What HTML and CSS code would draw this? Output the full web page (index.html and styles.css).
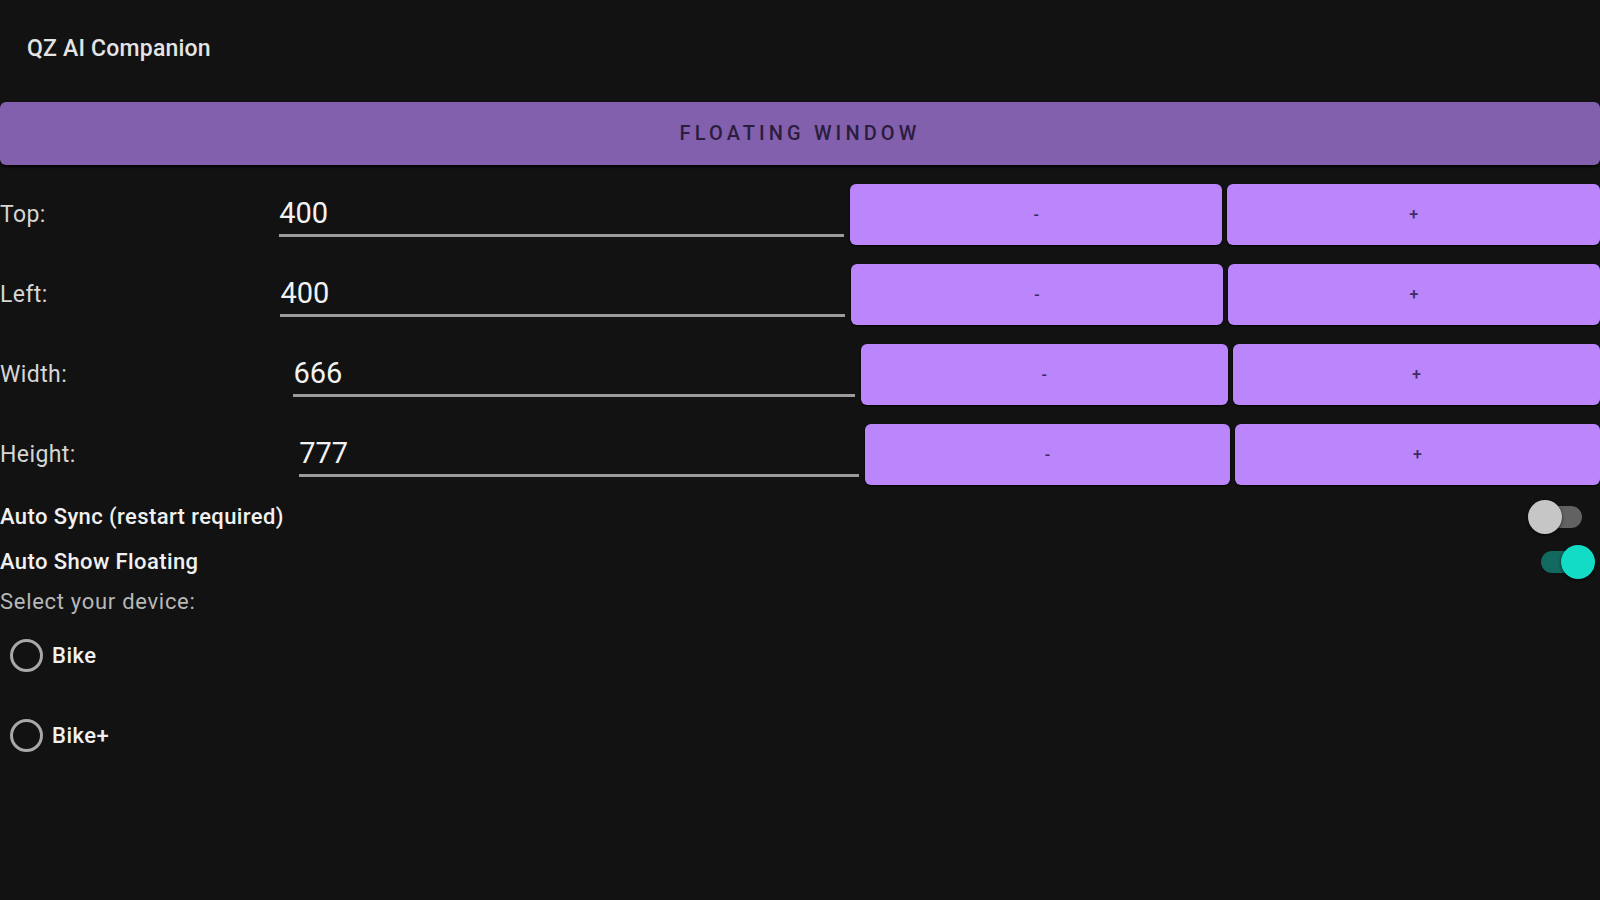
FILE: index.html
```html
<!DOCTYPE html>
<html lang="en">
<head>
<meta charset="utf-8">
<title>QZ AI Companion</title>
<link rel="stylesheet" href="styles.css">
</head>
<body>
<div class="app">
  <header class="topbar">
    <div class="title">QZ AI Companion</div>
  </header>

  <div class="section-bar">FLOATING WINDOW</div>

  <div class="fields">
    <div class="row">
      <div class="label">Top:</div>
      <div class="field"><span class="value">400</span></div>
      <div class="steppers">
        <button class="step">-</button>
        <button class="step">+</button>
      </div>
    </div>
    <div class="row">
      <div class="label">Left:</div>
      <div class="field"><span class="value">400</span></div>
      <div class="steppers">
        <button class="step">-</button>
        <button class="step">+</button>
      </div>
    </div>
    <div class="row">
      <div class="label">Width:</div>
      <div class="field"><span class="value">666</span></div>
      <div class="steppers">
        <button class="step">-</button>
        <button class="step">+</button>
      </div>
    </div>
    <div class="row">
      <div class="label">Height:</div>
      <div class="field"><span class="value">777</span></div>
      <div class="steppers">
        <button class="step">-</button>
        <button class="step">+</button>
      </div>
    </div>
  </div>

  <div class="switch-row">
    <div class="switch-label">Auto Sync (restart required)</div>
    <div class="switch switch-off switch-a"><span class="track"></span><span class="thumb"></span></div>
  </div>
  <div class="switch-row">
    <div class="switch-label">Auto Show Floating</div>
    <div class="switch switch-on switch-b"><span class="track"></span><span class="thumb"></span></div>
  </div>

  <div class="select-label">Select your device:</div>

  <div class="radio-row">
    <span class="radio"></span>
    <span class="radio-label">Bike</span>
  </div>
  <div class="radio-row">
    <span class="radio"></span>
    <span class="radio-label">Bike+</span>
  </div>
</div>
</body>
</html>
```

FILE: styles.css
```css
* {
  box-sizing: border-box;
}

html, body {
  margin: 0;
  padding: 0;
  background: #121212;
}

body {
  width: 1600px;
  height: 900px;
  overflow: hidden;
  font-family: Roboto, "Noto Sans", "Liberation Sans", sans-serif;
  color: #e6e6e6;
}

.topbar {
  height: 102px;
  padding: 36px 0 0 27px;
}

.title {
  font-size: 23px;
  line-height: 26px;
  font-weight: 500;
  letter-spacing: 0.2px;
  color: #e4e4e4;
}

.section-bar {
  height: 63px;
  line-height: 63px;
  background: #8260ad;
  border-radius: 6px;
  box-shadow: 0 2px 3px rgba(0, 0, 0, 0.8);
  text-align: center;
  font-size: 20px;
  font-weight: 500;
  letter-spacing: 4.1px;
  color: #2b1d3d;
}

.fields {
  padding-top: 9px;
}

.row {
  display: flex;
  align-items: center;
  height: 80px;
}

.label {
  flex: 2 1 auto;
  font-size: 23px;
  line-height: 26px;
  letter-spacing: 0.4px;
  padding-top: 2px;
  color: #d6d6d6;
}

.field {
  flex: 1 1 448px;
  align-self: flex-start;
  margin-top: 22px;
  padding-bottom: 4px;
  border-bottom: 3px solid #9c9c9c;
}

.value {
  display: block;
  font-size: 29px;
  line-height: 34px;
  color: #f2f2f2;
}

.steppers {
  flex: 3 1 400px;
  display: flex;
  gap: 5px;
  margin-left: 6px;
}

.step {
  flex: 1 1 0;
  height: 61px;
  border: none;
  border-radius: 6px;
  background: #bb86fc;
  box-shadow: 0 1px 2px rgba(0, 0, 0, 0.9);
  font-family: Roboto, "Noto Sans", sans-serif;
  font-size: 16px;
  font-weight: 500;
  color: #412b62;
  padding: 0;
}

.switch-row {
  display: flex;
  align-items: center;
  justify-content: space-between;
  height: 45px;
}

.switch-label {
  font-size: 22px;
  font-weight: 500;
  letter-spacing: 0.4px;
  color: #f0f0f0;
}

.switch {
  position: relative;
  width: 56px;
  height: 34px;
}

.switch-a {
  margin-right: 16px;
}

.switch-b {
  margin-right: 5px;
}

.track {
  position: absolute;
  left: 2px;
  top: 6px;
  width: 52px;
  height: 22px;
  border-radius: 11px;
}

.thumb {
  position: absolute;
  top: 0;
  width: 34px;
  height: 34px;
  border-radius: 50%;
  box-shadow: 0 1px 3px rgba(0, 0, 0, 0.7);
}

.switch-off .track {
  background: #626262;
}

.switch-off .thumb {
  left: 0;
  background: #c6c6c6;
}

.switch-on .track {
  background: #12695f;
}

.switch-on .thumb {
  right: 0;
  background: #12dcc6;
}

.select-label {
  padding-top: 5px;
  font-size: 22px;
  line-height: 26px;
  letter-spacing: 0.7px;
  color: #b8b8b8;
}

.radio-row {
  display: flex;
  align-items: center;
  height: 80px;
  padding-left: 10px;
}

.radio {
  width: 33px;
  height: 33px;
  border: 3px solid #a8a8a8;
  border-radius: 50%;
  margin-right: 9px;
}

.radio-label {
  font-size: 22px;
  font-weight: 500;
  letter-spacing: 0.5px;
  color: #f0f0f0;
}
```
